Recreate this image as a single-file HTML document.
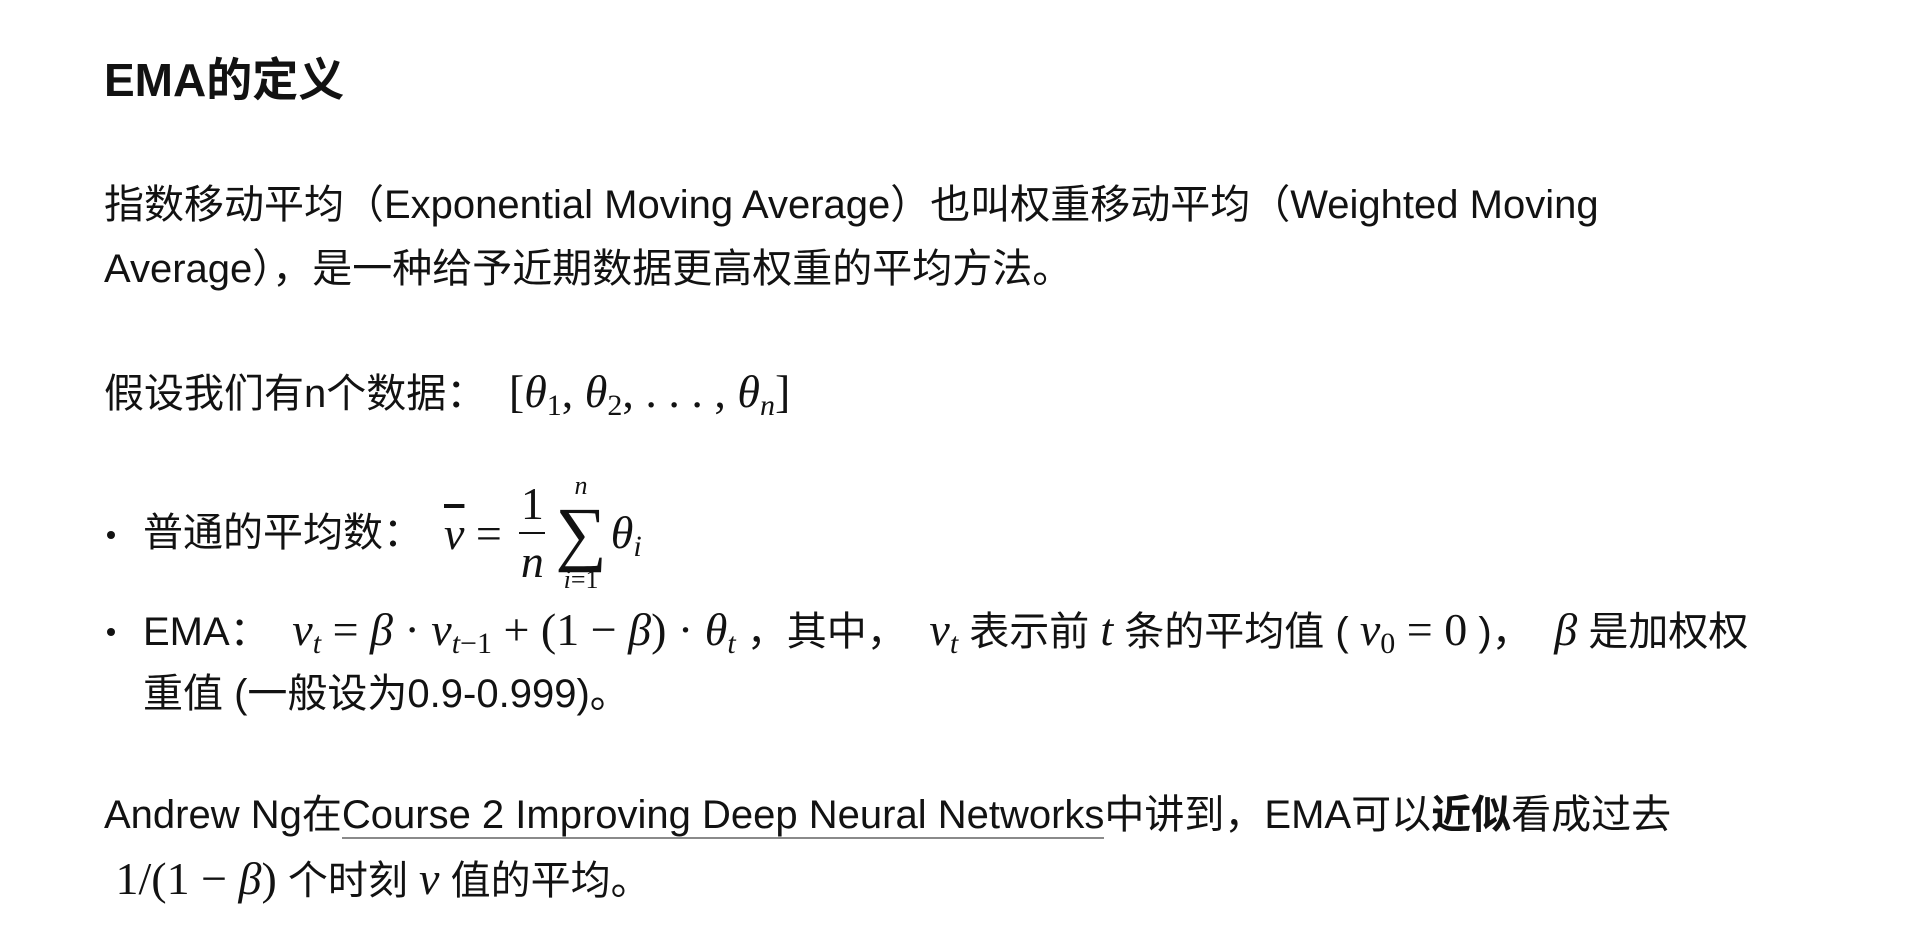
<!DOCTYPE html>
<html><head><meta charset="utf-8"><style>
html,body{margin:0;padding:0;background:#fff;}
body{width:1924px;height:926px;position:relative;overflow:hidden;color:#121212;font-family:"Liberation Sans","Noto Sans CJK SC",sans-serif;font-size:40px;}
.l{position:absolute;left:104px;line-height:64px;height:64px;white-space:nowrap;}
.m{font-family:"Liberation Serif","DejaVu Serif",serif;font-size:46px;}
.i{font-style:italic;}
sub{font-size:30px;vertical-align:-8px;line-height:0;}
.dot{position:absolute;left:107px;width:8px;height:8px;border-radius:50%;background:#121212;}
.mb{position:absolute;display:flex;align-items:center;height:140px;white-space:nowrap;}
.frac{display:inline-flex;flex-direction:column;align-items:center;line-height:1;margin:0 6px;}
.frac span{display:block;}
.frac .bar{width:26px;height:2px;background:#121212;margin:5px 0;}
.sum{display:inline-flex;flex-direction:column;align-items:center;line-height:1;margin:0 4px;}
a{color:#121212;text-decoration:none;border-bottom:2px solid #8a8a8a;}
</style></head><body>
<div class="l" style="top:48px;font-weight:bold;font-size:46px;">EMA的定义</div>

<div class="l" style="top:173px;">指数移动平均（Exponential Moving Average）也叫权重移动平均（Weighted Moving</div>
<div class="l" style="top:237px;">Average），是一种给予近期数据更高权重的平均方法。</div>

<div class="l" style="top:360px;">假设我们有n个数据： <span class="m">&nbsp;[<span class="i">θ</span><sub>1</sub>, <span class="i">θ</span><sub>2</sub>, . . . , <span class="i">θ<sub>n</sub></span>]</span></div>

<div class="dot" style="top:531px;"></div>
<div class="l" style="top:501px;left:143px;">普通的平均数：</div>
<div class="mb m" style="left:444px;top:463px;"><span class="i" style="text-decoration:overline;">v</span>&nbsp;=&nbsp;<span class="frac"><span>1</span><span class="bar"></span><span class="i">n</span></span><span class="sum"><span class="i" style="font-size:26px;">n</span><span style="font-size:72px;line-height:0.95;">∑</span><span style="font-size:26px;"><span class="i">i</span>=1</span></span><span style="line-height:64px;"><span class="i">θ</span><sub class="i">i</sub></span></div>

<div class="dot" style="top:628px;"></div>
<div class="l" style="top:598px;left:143px;">EMA： <span class="m">&nbsp;<span class="i">v<sub>t</sub></span> = <span class="i">β</span> · <span class="i">v</span><sub><span class="i">t</span>−1</sub> + (1 − <span class="i">β</span>) · <span class="i">θ<sub>t</sub></span></span> ，其中， <span class="m i">&nbsp;v<sub>t</sub></span> 表示前 <span class="m i">t</span> 条的平均值 ( <span class="m"><span class="i">v</span><sub>0</sub> = 0</span> )， <span class="m i">&nbsp;β</span> 是加权权</div>
<div class="l" style="top:662px;left:143px;">重值 (一般设为0.9-0.999)。</div>

<div class="l" style="top:783px;">Andrew Ng在<a>Course 2 Improving Deep Neural Networks</a>中讲到，EMA可以<b>近似</b>看成过去</div>
<div class="l" style="top:847px;"><span class="m">&nbsp;1/(1 − <span class="i">β</span>)</span> 个时刻 <span class="m i">v</span> 值的平均。</div>
</body></html>
